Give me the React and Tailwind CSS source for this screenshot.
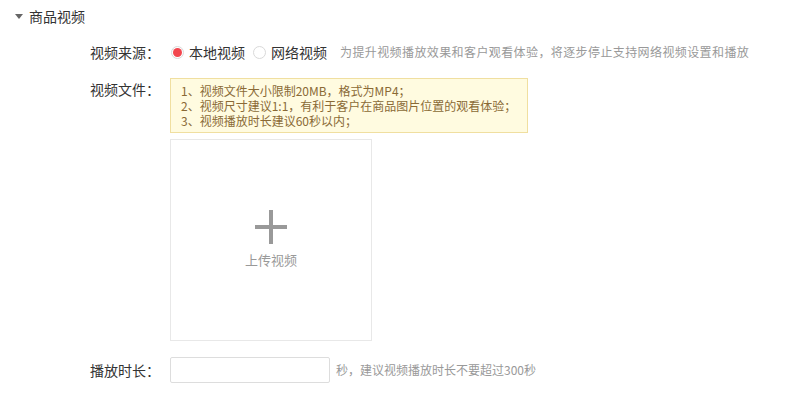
const FONT = { fontFamily: '"Microsoft YaHei", "Noto Sans CJK SC", "Noto Sans", sans-serif' };

function Radio({ checked, label }) {
  return (
    <label className="flex items-center gap-[5px] text-[14px] text-[#333] cursor-pointer">
      <span className="w-[13px] h-[13px] rounded-full border border-[#d9d9d9] bg-white flex items-center justify-center">
        {checked && <span className="w-[9px] h-[9px] rounded-full bg-[#f2464e]" />}
      </span>
      {label}
    </label>
  );
}

function Label({ children }) {
  return <div className="w-[80px] shrink-0 text-[14px] text-[#333] leading-[20px]">{children}</div>;
}

export default function App() {
  return (
    <div className="w-[798px] h-[397px] bg-white pl-[15px] pt-[6px]" style={FONT}>
      {/* section title */}
      <div className="flex items-center h-[20px]">
        <span className="w-0 h-0 border-l-[4px] border-r-[4px] border-t-[5px] border-l-transparent border-r-transparent border-t-[#666]" />
        <span className="ml-[6px] text-[14px] text-[#333]">商品视频</span>
      </div>

      <div className="pl-[75px] mt-[16px]">
        {/* video source */}
        <div className="flex items-center h-[20px]">
          <Label>视频来源：</Label>
          <div className="flex items-center gap-[8px] ml-[1px]">
            <Radio checked label="本地视频" />
            <Radio label="网络视频" />
          </div>
          <span className="ml-[13px] text-[12px] text-[#999] tracking-[0.4px]">
            为提升视频播放效果和客户观看体验，将逐步停止支持网络视频设置和播放
          </span>
        </div>

        {/* video file */}
        <div className="flex mt-[16px]">
          <Label><div className="mt-[1px]">视频文件：</div></Label>
          <div>
            <div className="w-[358px] h-[55px] bg-[#fffbe0] border border-[#f0dfa0] pl-[10px] pt-[4px] text-[12px] leading-[15px] text-[#8a6a36]">
              <p>1、视频文件大小限制20MB，格式为MP4；</p>
              <p>2、视频尺寸建议1:1，有利于客户在商品图片位置的观看体验；</p>
              <p>3、视频播放时长建议60秒以内；</p>
            </div>
            <button className="mt-[6px] w-[202px] h-[202px] border border-[#e8e8e8] bg-white flex flex-col items-center justify-center">
              <svg width="32" height="34" viewBox="0 0 32 34">
                <rect x="0" y="15" width="32" height="4" fill="#999" />
                <rect x="14" y="0" width="4" height="34" fill="#999" />
              </svg>
              <span className="mt-[6px] text-[13px] text-[#999]">上传视频</span>
            </button>
          </div>
        </div>

        {/* duration */}
        <div className="flex items-center mt-[16px]">
          <Label>播放时长：</Label>
          <input className="w-[160px] h-[26px] border border-[#ddd] rounded-[2px] outline-none px-2 text-[12px]" />
          <span className="ml-[6px] text-[12px] text-[#999]">秒，建议视频播放时长不要超过300秒</span>
        </div>
      </div>
    </div>
  );
}
